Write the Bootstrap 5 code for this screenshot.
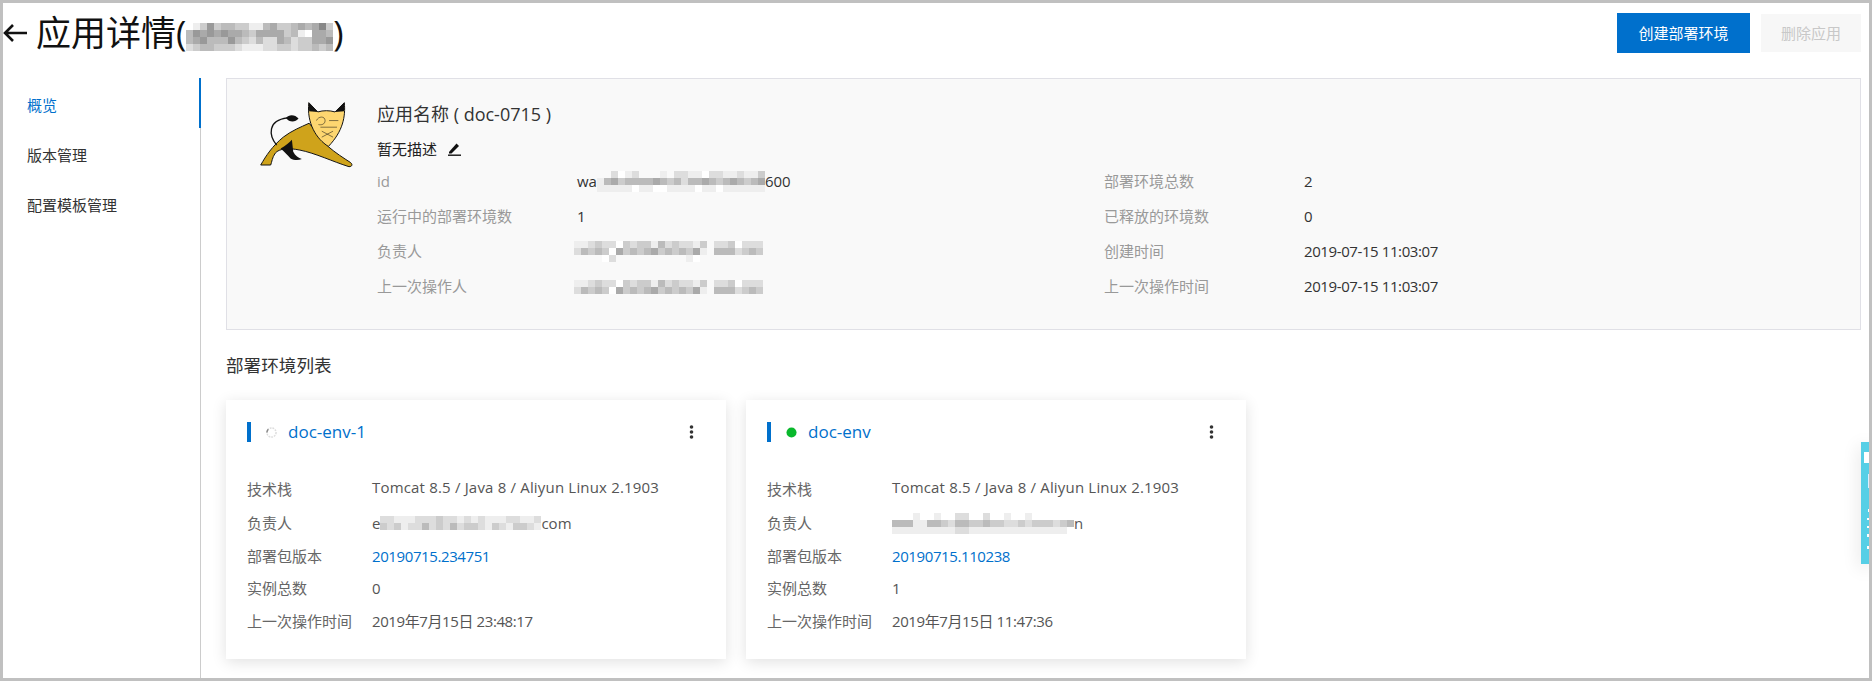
<!DOCTYPE html>
<html lang="zh-CN">
<head>
  <meta charset="UTF-8" />
  <meta name="viewport" content="width=device-width, initial-scale=1.0"/>
  <title>应用详情</title>
  <link href="https://cdn.jsdelivr.net/npm/bootstrap@5.3.3/dist/css/bootstrap.min.css" rel="stylesheet">
  <style>
    body {
      margin: 0;
      background: #fff;
      color: #333;
      font-family: "Open Sans", "Noto Sans CJK SC", sans-serif;
      font-size: 15px;
    }

    .app-frame {
      width: 1872px;
      height: 681px;
      border: 3px solid #c0c0c0;
      position: relative;
      overflow: hidden;
    }

    /* header */
    .app-head {
      height: 75px;
      padding: 10px 8px 0 0;
    }

    .app-title {
      font-size: 35px;
      line-height: 40px;
      color: #111;
      margin: 0;
      font-weight: 400;
    }

    .app-back {
      width: 24px;
      height: 20px;
      margin-right: 9px;
    }

    .btn-create {
      width: 133px;
      height: 40px;
      padding: 0;
      border: 0;
      border-radius: 0;
      background: #0070cc;
      color: #fff;
      font-size: 15px;
    }

    .btn.btn-remove:disabled {
      width: 100px;
      height: 38px;
      padding: 0;
      border: 0;
      border-radius: 0;
      background: #f7f7f7;
      color: #c8c8c8;
      font-size: 15px;
      opacity: 1;
      margin-left: 11px;
    }

    /* sidebar */
    .side-menu {
      width: 198px;
      height: 600px;
      border-right: 1px solid #ccc;
    }

    .side-link {
      height: 50px;
      line-height: 54px;
      padding: 0 0 0 24px;
      color: #333;
      margin-right: -1px;
      border-right: 2px solid transparent;
      text-decoration: none;
    }

    .side-link.active {
      color: #0070cc;
      border-right-color: #0070cc;
    }

    .main-area {
      padding: 0 8px 0 25px;
      flex: 1;
      min-width: 0;
    }

    /* info panel */
    .info-panel {
      height: 252px;
      background: #f9f9f9;
      border: 1px solid #e0e0e6;
      padding: 20px 0 0 31px;
    }

    .cat-logo {
      width: 97px;
      height: 68px;
      margin: 1px 22px 0 0;
      flex: none;
    }

    .app-name {
      font-size: 18px;
      line-height: 30px;
      color: #333;
    }

    .app-desc {
      line-height: 30px;
      margin-top: 5px;
      color: #222;
    }

    .app-desc svg {
      margin-left: 11px;
    }

    .info-grid {
      display: grid;
      grid-template-columns: 200px 527px 200px 1fr;
      grid-auto-rows: 35px;
      align-items: center;
      color: #333;
    }

    .info-key {
      color: #999;
    }

    .blur-val {
      display: flex;
      align-items: center;
    }

    .blur-only {
      margin-left: -3px;
    }

    .num-text {
      letter-spacing: -.4px;
    }

    .stack-text {
      letter-spacing: .18px;
    }

    .section-title {
      font-size: 17.6px;
      line-height: 30px;
      margin: 20px 0 20px;
      color: #333;
      font-weight: 400;
    }

    /* env cards */
    .env-list {
      gap: 20px;
    }

    .env-box {
      width: 500px;
      height: 259px;
      padding: 22px 21px 0;
      border: 0;
      border-radius: 0;
      box-shadow: 0 3px 14px rgba(0, 0, 0, .12);
    }

    .env-head {
      height: 20px;
      margin-bottom: 30.5px;
    }

    .env-bar {
      width: 4px;
      height: 20px;
      background: #0070cc;
      margin-right: 15px;
    }

    .env-state {
      width: 11px;
      height: 11px;
      margin-right: 11px;
    }

    .env-name {
      font-size: 17px;
      color: #0070cc;
      text-decoration: none;
    }

    .env-more {
      width: 5px;
      height: 14px;
      margin-right: 11px;
    }

    .env-line {
      height: 32.5px;
      line-height: 32.5px;
      color: #555;
      white-space: nowrap;
    }

    .env-head + .env-line {
      margin-bottom: 2px;
    }

    .env-key {
      width: 125px;
      color: #666;
      flex: none;
    }

    .env-stack {
      position: relative;
      top: -2px;
    }

    .env-link {
      color: #0070cc;
      text-decoration: none;
    }

    /* help tab on the right edge */
    .help-tab {
      position: absolute;
      right: 0;
      top: 439px;
      width: 8px;
      height: 122px;
      background: #56cfe6;
      box-shadow: 0 4px 18px rgba(0, 0, 0, .15);
    }

    .help-tab svg {
      display: block;
    }
  </style>
</head>
<body>
  <div class="app-frame">

    <div class="app-head d-flex justify-content-between align-items-start">
      <div class="d-flex align-items-center">
        <svg class="app-back" viewBox="0 0 24 20"><path d="M24 10H2M10 2l-8 8 8 8" fill="none" stroke="#111" stroke-width="2.6"/></svg>
        <h1 class="app-title d-flex align-items-center">应用详情(<span data-mosaic="title"></span>)</h1>
      </div>
      <div class="d-flex align-items-center">
        <button class="btn btn-create">创建部署环境</button>
        <button class="btn btn-remove" disabled>删除应用</button>
      </div>
    </div>

    <div class="d-flex">
      <div class="side-menu nav flex-column">
        <a class="side-link active" href="#">概览</a>
        <a class="side-link" href="#">版本管理</a>
        <a class="side-link" href="#">配置模板管理</a>
      </div>

      <div class="main-area">
        <div class="info-panel d-flex">
          <svg class="cat-logo" viewBox="25 30 290 205">
            <path d="M32 226C48 198 66 170 100 142C126 122 152 112 178 100L235 170C258 190 282 205 302 218C310 224 308 231 298 231C250 216 196 190 150 181C116 174 88 176 76 190C66 204 66 216 62 226Z" fill="#cfa31b" stroke="#111" stroke-width="3"/>
            <path d="M92 176C106 170 118 158 126 150L130 186C136 198 146 204 156 208C146 212 132 212 122 206C112 196 102 184 92 176Z" fill="#111"/>
            <path d="M80 166C56 136 52 92 112 84" fill="none" stroke="#111" stroke-width="4"/>
            <path d="M108 84C118 72 136 74 146 86C136 98 118 98 108 84Z" fill="#111"/>
            <path d="M177 38L204 66C220 61 240 61 256 66L284 38C288 80 280 124 236 170C200 148 170 100 177 38Z" fill="#fdd670" stroke="#111" stroke-width="3"/>
            <path d="M177 38L204 66L178 64ZM284 38L256 66L283 64Z" fill="#111"/>
            <path d="M200 92C206 78 226 78 226 92C226 104 214 106 206 104M212 112H262M238 92H266M216 124L250 142M250 124L216 142" fill="none" stroke="#111" stroke-width="1.6"/>
          </svg>
          <div class="flex-grow-1">
            <div class="app-name">应用名称 ( doc-0715 )</div>
            <div class="app-desc d-flex align-items-center">暂无描述
              <svg width="13" height="14" viewBox="0 0 13 14"><path d="M1 10L8.5 1.5 11 4 3.5 11.5 1 11.5Z" fill="#111"/><path d="M0 13.2H13" stroke="#111" stroke-width="1.4"/></svg>
            </div>
            <div class="info-grid">
              <div class="info-key">id</div>
              <div class="blur-val">wa<span data-mosaic="appid"></span>600</div>
              <div class="info-key">部署环境总数</div>
              <div>2</div>
              <div class="info-key">运行中的部署环境数</div>
              <div>1</div>
              <div class="info-key">已释放的环境数</div>
              <div>0</div>
              <div class="info-key">负责人</div>
              <div class="blur-val blur-only"><span data-mosaic="owner"></span></div>
              <div class="info-key">创建时间</div>
              <div class="num-text">2019-07-15 11:03:07</div>
              <div class="info-key">上一次操作人</div>
              <div class="blur-val blur-only"><span data-mosaic="operator"></span></div>
              <div class="info-key">上一次操作时间</div>
              <div class="num-text">2019-07-15 11:03:07</div>
            </div>
          </div>
        </div>

        <h2 class="section-title">部署环境列表</h2>

        <div class="env-list d-flex">
          <div class="card env-box">
            <div class="env-head d-flex align-items-center">
              <span class="env-bar"></span>
              <svg class="env-state" viewBox="0 0 12 12"><circle cx="6" cy="6" r="5" fill="none" stroke="#ddd" stroke-width="1.6" stroke-dasharray="2 1"/><path d="M2.5 2.5A5 5 0 0 0 1 6" fill="none" stroke="#888" stroke-width="1.6"/></svg>
              <a class="env-name" href="#">doc-env-1</a>
              <svg class="env-more ms-auto" viewBox="0 0 5 14"><circle cx="2.5" cy="2" r="1.8" fill="#333"/><circle cx="2.5" cy="7" r="1.8" fill="#333"/><circle cx="2.5" cy="12" r="1.8" fill="#333"/></svg>
            </div>
            <div class="env-line d-flex"><span class="env-key">技术栈</span><span class="env-stack stack-text">Tomcat 8.5 / Java 8 / Aliyun Linux 2.1903</span></div>
            <div class="env-line d-flex align-items-center"><span class="env-key">负责人</span><span>e</span><span data-mosaic="mail1"></span><span>com</span></div>
            <div class="env-line d-flex"><span class="env-key">部署包版本</span><a class="env-link num-text" href="#">20190715.234751</a></div>
            <div class="env-line d-flex"><span class="env-key">实例总数</span><span>0</span></div>
            <div class="env-line d-flex"><span class="env-key">上一次操作时间</span><span class="num-text">2019年7月15日 23:48:17</span></div>
          </div>

          <div class="card env-box">
            <div class="env-head d-flex align-items-center">
              <span class="env-bar"></span>
              <svg class="env-state" viewBox="0 0 12 12"><circle cx="6" cy="6" r="5.5" fill="#09b82c"/></svg>
              <a class="env-name" href="#">doc-env</a>
              <svg class="env-more ms-auto" viewBox="0 0 5 14"><circle cx="2.5" cy="2" r="1.8" fill="#333"/><circle cx="2.5" cy="7" r="1.8" fill="#333"/><circle cx="2.5" cy="12" r="1.8" fill="#333"/></svg>
            </div>
            <div class="env-line d-flex"><span class="env-key">技术栈</span><span class="env-stack stack-text">Tomcat 8.5 / Java 8 / Aliyun Linux 2.1903</span></div>
            <div class="env-line d-flex align-items-center"><span class="env-key">负责人</span><span data-mosaic="mail2"></span><span>n</span></div>
            <div class="env-line d-flex"><span class="env-key">部署包版本</span><a class="env-link num-text" href="#">20190715.110238</a></div>
            <div class="env-line d-flex"><span class="env-key">实例总数</span><span>1</span></div>
            <div class="env-line d-flex"><span class="env-key">上一次操作时间</span><span class="num-text">2019年7月15日 11:47:36</span></div>
          </div>
        </div>
      </div>
    </div>

    <div class="help-tab">
      <svg width="8" height="122" viewBox="0 0 8 122">
        <rect x="3" y="10" width="5" height="11" fill="#fff"/>
        <rect x="7" y="32" width="1" height="14" fill="#def"/>
        <rect x="7" y="67" width="1" height="3" fill="#fff"/>
        <rect x="6" y="76" width="2" height="2" fill="#fff"/>
        <rect x="6" y="84" width="2" height="2" fill="#fff"/>
        <rect x="6" y="92" width="2" height="3" fill="#fff"/>
        <rect x="6" y="104" width="2" height="3" fill="#fff"/>
      </svg>
    </div>
  </div>

  <script>
    // blurred-out values: each char is the grey level of one 7px cell, "." = empty
    const mosaics = {
      title: ['......f..............', 'fec9cbbcceebaccbaba8c', 'b9a9a9aabcaaaacbefaab', 'ba9bbb9bcdbddabdccaa9', 'dcbbcccdeeeddccdccbcb'],
      appid: ['..dfed...e.ddeefddeedeec', 'ebacbbbbabcbdbbabcbabcba', 'eeeeefeeffeeeefeefeeeeee'],
      owner: ['eedcddfcdccebdcddec.ddcfddd', 'dbcbcfacbcbacbcbcae.bbbdcbc', '....fd..........ef.........'],
      operator: ['eedcddfcdccebdcddec.ddcfddd', 'dbcbcfacbcbacbcbcae.bbbdcbc'],
      mail1: ['ddeeedddcddededeeeddeed', 'cdceddbdcdbdccdecdeccde'],
      mail2: ['...e..e..dd..d..e..e..', 'bbbeebbcdbbccbccddcdcccdcb', 'eeeeeeeeeddeeeeeeeeeeeeeef']
    };

    document.querySelectorAll('[data-mosaic]').forEach(el => {
      const rows = mosaics[el.dataset.mosaic];
      const cols = Math.max(...rows.map(r => r.length));
      let rects = '';
      rows.forEach((row, y) => {
        [...row].forEach((c, x) => {
          if (c === '.') return;
          rects += `<rect x="${x * 7}" y="${y * 7}" width="7" height="7" fill="#${c}${c}${c}"/>`;
        });
      });
      el.innerHTML = `<svg class="d-block" width="${cols * 7}" height="${rows.length * 7}">${rects}</svg>`;
    });
  </script>
  <script src="https://cdn.jsdelivr.net/npm/bootstrap@5.3.3/dist/js/bootstrap.bundle.min.js"></script>
</body>
</html>
